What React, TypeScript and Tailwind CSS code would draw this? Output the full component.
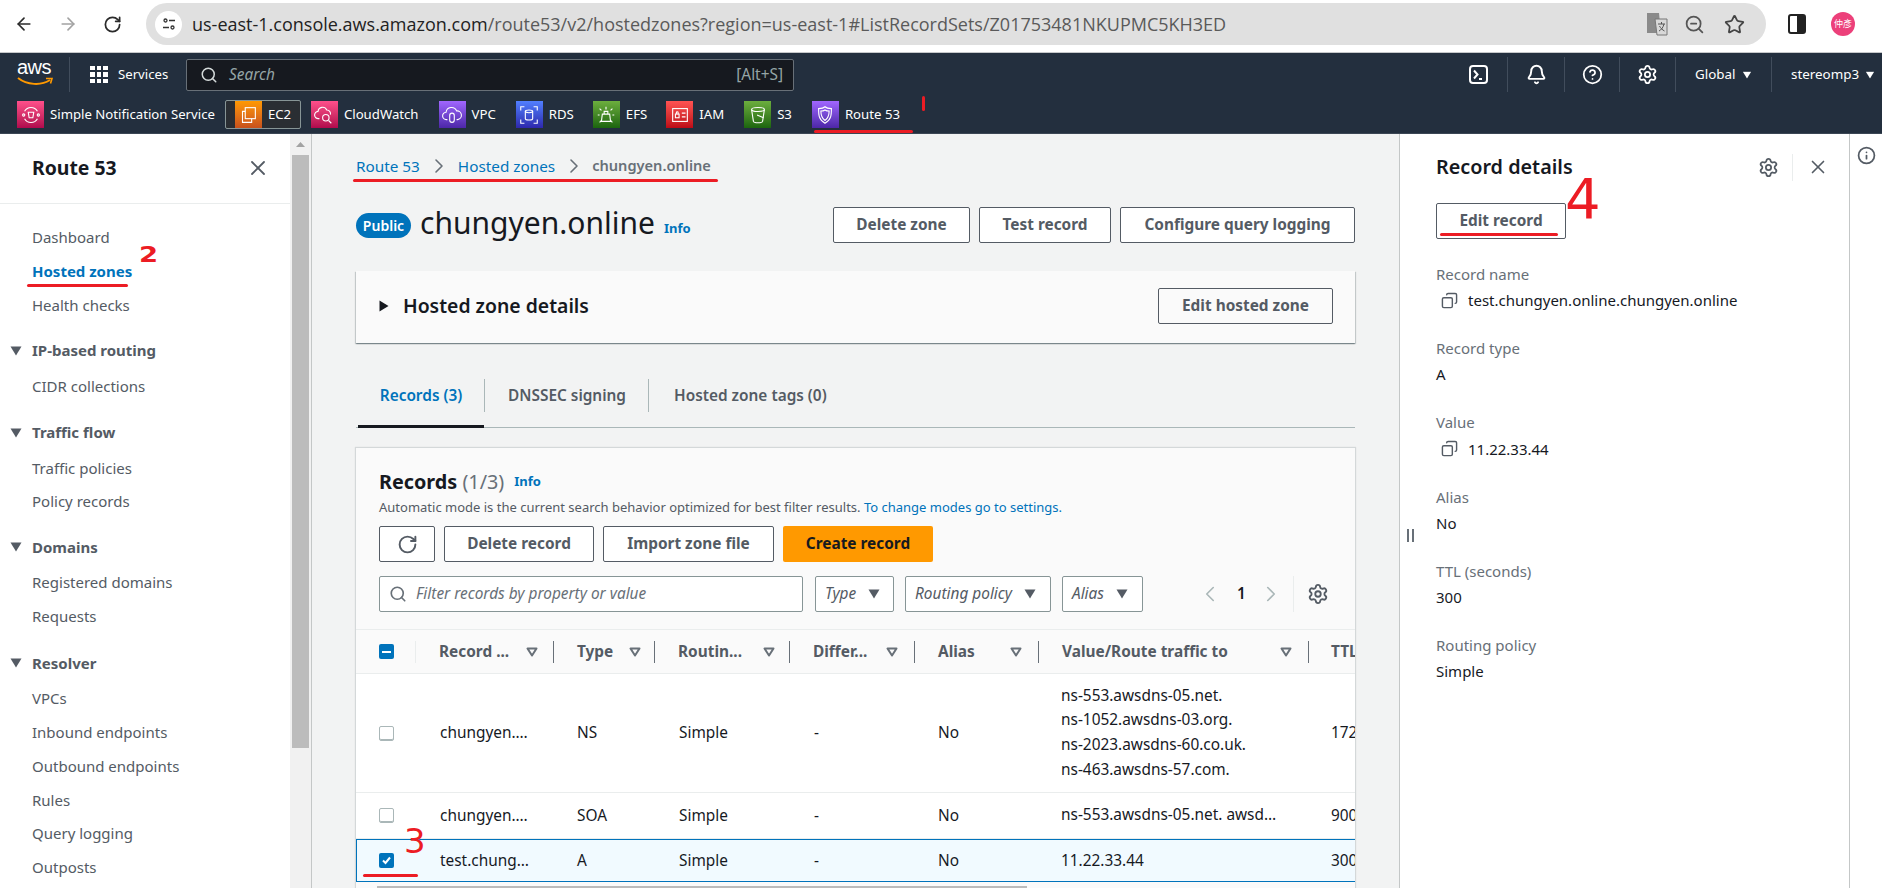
import {
  ArrowLeft,
  ArrowRight,
  Bell,
  ChevronLeft,
  ChevronRight,
  CircleHelp,
  Copy,
  Info,
  RotateCw,
  Search,
  Settings,
  Star,
  X,
  ZoomOut,
} from "lucide-react";

const services = [
  { name: "Simple Notification Service", bg: "from-[#b0084d] to-[#ff4f8b]", kind: "sns", w: "mr-[10px]" },
  { name: "EC2", bg: "from-[#c8511b] to-[#ff9900]", kind: "ec2", w: "" },
  { name: "CloudWatch", bg: "from-[#b0084d] to-[#ff4f8b]", kind: "cw", w: "mr-[20px]" },
  { name: "VPC", bg: "from-[#4d27a8] to-[#a166ff]", kind: "vpc", w: "mr-[20px]" },
  { name: "RDS", bg: "from-[#2e27ad] to-[#527fff]", kind: "rds", w: "mr-[19px]" },
  { name: "EFS", bg: "from-[#1b660f] to-[#6cae3e]", kind: "efs", w: "mr-[19px]" },
  { name: "IAM", bg: "from-[#bd0816] to-[#ff5252]", kind: "iam", w: "mr-[20px]" },
  { name: "S3", bg: "from-[#1b660f] to-[#6cae3e]", kind: "s3", w: "mr-[20px]" },
  { name: "Route 53", bg: "from-[#4d27a8] to-[#a166ff]", kind: "r53", w: "" },
];

const serviceGlyphs: Record<string, React.ReactNode> = {
  sns: (
    <>
      <path d="M5 8a8 8 0 0 1 14 0M5 16a8 8 0 0 0 14 0" />
      <path d="M9 9h6l-1 6h-4z" />
      <circle cx="4" cy="12" r="1.2" />
      <circle cx="20" cy="12" r="1.2" />
    </>
  ),
  ec2: (
    <>
      <rect x="9" y="4" width="11" height="12" />
      <path d="M9 8H6v12h10v-4" />
    </>
  ),
  cw: (
    <>
      <path d="M7 16H6a4 4 0 0 1-.5-8A5 5 0 0 1 15 6.500a4 4 0 0 1 4 5" />
      <circle cx="14" cy="15" r="3.500" />
      <path d="m17 18 3 3" />
    </>
  ),
  vpc: (
    <>
      <path d="M7 17H6a4 4 0 0 1-.5-8A6 6 0 0 1 17 7.500 4.500 4.500 0 0 1 18 17h-1" />
      <rect x="9.500" y="10" width="5" height="10" rx="2.500" />
    </>
  ),
  rds: (
    <>
      <path d="M3 7V3h4M17 3h4v4M3 17v4h4M21 17v4h-4" />
      <ellipse cx="12" cy="8" rx="4" ry="1.500" />
      <path d="M8 8v8c0 2 8 2 8 0V8" />
    </>
  ),
  efs: (
    <>
      <path d="M8 11h8l1 8H7z" />
      <path d="M10 11V8h4v3M12 3v3M3 12h2M19 12h2M5 5l2 2M19 5l-2 2M5 20l2-2M19 20l-2-2" />
    </>
  ),
  iam: (
    <>
      <rect x="4" y="5" width="16" height="14" />
      <rect x="7" y="11" width="4" height="4" />
      <path d="M8 11V9.500a1 1 0 0 1 2 0V11M14 10h4M14 14h4" />
    </>
  ),
  s3: (
    <>
      <ellipse cx="12" cy="6" rx="7" ry="2.200" />
      <path d="M5 6l2 13c.5 2 9.500 2 10 0l2-13" />
      <path d="m11 12 7 3" />
    </>
  ),
  r53: (
    <>
      <path d="M12 3c2 2 5 2 7 2 0 7 0 12-7 16C5 17 5 12 5 5c2 0 5 0 7-2z" />
      <path d="M12 6.500c1.500 1 3 1.200 4.500 1.200 0 4.500-.5 7.500-4.500 10.300-4-2.800-4.500-5.800-4.500-10.300 1.500 0 3-.2 4.500-1.200z" />
    </>
  ),
};

const sideNav = [
  { items: ["Dashboard", "Hosted zones", "Health checks"], mt: "mt-[21px]" },
  { title: "IP-based routing", items: ["CIDR collections"], mt: "mt-[22px]" },
  { title: "Traffic flow", items: ["Traffic policies", "Policy records"], mt: "mt-[23px]" },
  { title: "Domains", items: ["Registered domains", "Requests"], mt: "mt-[22px]" },
  { title: "Resolver", items: ["VPCs", "Inbound endpoints", "Outbound endpoints", "Rules", "Query logging", "Outposts"], mt: "mt-[23px]" },
];

const columns = [
  { label: "Record ...", icon: "ml-[17px]" },
  { label: "Type", icon: "ml-[16px]" },
  { label: "Routin...", icon: "ml-[21px]" },
  { label: "Differ...", icon: "ml-[19px]" },
  { label: "Alias", icon: "ml-[35px]" },
  { label: "Value/Route traffic to", icon: "ml-[52px]" },
];

const rows = [
  {
    name: "chungyen.…",
    type: "NS",
    ttl: "172",
    height: "h-[119px]",
    value: ["ns-553.awsdns-05.net.", "ns-1052.awsdns-03.org.", "ns-2023.awsdns-60.co.uk.", "ns-463.awsdns-57.com."],
  },
  { name: "chungyen.…", type: "SOA", ttl: "900", height: "h-[46px]", value: ["ns-553.awsdns-05.net. awsd…"] },
];

const details = [
  { label: "Record name", value: "test.chungyen.online.chungyen.online", copy: true },
  { label: "Record type", value: "A" },
  { label: "Value", value: "11.22.33.44", copy: true },
  { label: "Alias", value: "No" },
  { label: "TTL (seconds)", value: "300" },
  { label: "Routing policy", value: "Simple" },
];

const gridCols = "grid grid-cols-[60px_138px_101px_135px_125px_124px_270px_1fr]";

function Btn({ children, className = "" }: { children: React.ReactNode; className?: string }) {
  return (
    <button className={`h-9 flex items-center justify-center border border-[#545b64] rounded-[2px] bg-white text-[15.4px] font-bold text-[#545b64] ${className}`}>
      {children}
    </button>
  );
}

function SortIcon({ className = "" }: { className?: string }) {
  return (
    <svg width="12" height="10" viewBox="0 0 12 10" className={`shrink-0 ${className}`}>
      <path d="M1.500 1.500h9L6 8.500z" fill="none" stroke="#687078" strokeWidth="2" strokeLinejoin="round" />
    </svg>
  );
}

function Caret({ className = "" }: { className?: string }) {
  return (
    <svg width="12" height="10" viewBox="0 0 12 10" className={`shrink-0 ${className}`}>
      <path d="M0.500 0.500h11L6 9.500z" fill="currentColor" />
    </svg>
  );
}

function Select({ label, width, gap }: { label: string; width: string; gap: string }) {
  return (
    <div className={`h-9 flex items-center pl-[9px] border border-[#879596] rounded-[2px] bg-white ${width}`}>
      <span className="italic text-[15.4px] text-[#545b64]">{label}</span>
      <Caret className={`text-[#545b64] ${gap}`} />
    </div>
  );
}

function Checkbox({ state = "off" }: { state?: "off" | "on" | "mixed" }) {
  if (state === "off") return <div className="w-[15px] h-[15px] border border-[#aab7b8] rounded-[2px] bg-white shadow-[inset_0_-1px_0_#aab7b8]" />;
  return (
    <div className="w-[15px] h-[15px] rounded-[2px] bg-[#0073bb] flex items-center justify-center">
      {state === "on" ? (
        <svg width="11" height="11" viewBox="0 0 11 11">
          <path d="M2 5.500 4.500 8 9 2.500" fill="none" stroke="white" strokeWidth="2" />
        </svg>
      ) : (
        <div className="w-[9px] h-[2px] bg-white" />
      )}
    </div>
  );
}

function Chrome() {
  return (
    <div className="h-[53px] shrink-0 flex items-center pb-[6px] pt-[2px] bg-white border-b border-[#c6c8ca]">
      <ArrowLeft size={20} strokeWidth={2} className="ml-[14px] text-[#2b2b2b]" />
      <ArrowRight size={20} strokeWidth={2} className="ml-[24px] text-[#a3a3a3]" />
      <RotateCw size={19} strokeWidth={2.200} className="ml-[25px] text-[#2b2b2b]" />
      <div className="ml-[24px] w-[1620px] h-[42px] rounded-full bg-[#e0e0e0] flex items-center pl-[9px]">
        <div className="w-[27px] h-[27px] rounded-full bg-white flex items-center justify-center">
          <svg width="14" height="14" viewBox="0 0 14 14" fill="none" stroke="#333" strokeWidth="1.300">
            <circle cx="3.500" cy="3.500" r="1.500" />
            <path d="M7 3.500h6M1 10.500h6" />
            <circle cx="10.500" cy="10.500" r="1.500" />
          </svg>
        </div>
        <div className="ml-[10px] text-[18px] text-[#5a5a5a] whitespace-nowrap font-['Open_Sans',sans-serif]">
          <span className="text-[#222]">us-east-1.console.aws.amazon.com</span>
          /route53/v2/hostedzones?region=us-east-1#ListRecordSets/Z01753481NKUPMC5KH3ED
        </div>
        <svg width="22" height="24" viewBox="0 0 22 24" className="ml-auto shrink-0">
          <path d="M1 1h12l2 20H1z" fill="#8a8a8a" />
          <path d="M9 7h12v16H11z" fill="#d8d8d8" stroke="#777" />
          <path d="M12 12h7M15.500 10v2M18 12c-1 4-3 6-5 7M13.500 14c1 2 3 4 5 5" stroke="#555" fill="none" />
        </svg>
        <ZoomOut size={21} className="ml-[16px] text-[#555]" />
        <Star size={21} className="ml-[19px] mr-[21px] text-[#444]" />
      </div>
      <svg width="18" height="20" viewBox="0 0 18 20" className="ml-[22px] shrink-0">
        <rect x="1" y="1" width="16" height="18" rx="2" fill="white" stroke="#222" strokeWidth="2" />
        <rect x="9" y="1" width="8" height="18" fill="#222" />
      </svg>
      <div className="ml-[25px] w-6 h-6 rounded-full bg-[#ec407a] text-white text-[9px] flex items-center justify-center font-['Noto_Sans_CJK_TC',sans-serif]">
        仲彥
      </div>
    </div>
  );
}

function Glyph({ bg, kind }: { bg: string; kind: string }) {
  return (
    <div className={`w-[27px] h-[27px] shrink-0 bg-linear-to-t ${bg} flex items-center justify-center`}>
      <svg width="22" height="22" viewBox="0 0 24 24" fill="none" stroke="white" strokeWidth="1.200">
        {serviceGlyphs[kind]}
      </svg>
    </div>
  );
}

function ConsoleNav() {
  return (
    <div className="h-[80px] shrink-0 bg-[#232f3e] text-white flex flex-col">
      <div className="h-[39px] flex items-end">
        <div className="w-[70px] h-[35px] border-r border-[#414d5c] flex flex-col items-start pl-[17px] -mt-[1px]">
          <span className="text-[20px] leading-[21px] -tracking-[0.5px] font-['Liberation_Sans',sans-serif]">aws</span>
          <svg width="36" height="9" viewBox="0 0 36 9" className="-mt-[1px]">
            <path d="M1 1c9 7 23 8 32 2" fill="none" stroke="#ff9900" strokeWidth="2" />
            <path d="M29 1.500h6l-1.500 5" fill="none" stroke="#ff9900" strokeWidth="1.600" />
          </svg>
        </div>
        <div className="h-[35px] flex items-center pl-[20px]">
          <div className="grid grid-cols-3 gap-[2px] w-[18px]">
            {Array.from({ length: 9 }).map((_, i) => (
              <div key={i} className="w-[4.500px] h-[4.500px] bg-white" />
            ))}
          </div>
          <span className="ml-[10px] text-[13.200px] w-[68px]">Services</span>
        </div>
        <div className="h-[32px] w-[608px] mb-[1px] flex items-center bg-[#16191f] border border-[#687078] rounded-[2px] pl-[13px] pr-[10px]">
          <Search size={18} strokeWidth={2} className="text-[#d5dbdb]" />
          <span className="ml-[11px] text-[15.400px] italic text-[#95a5a6]">Search</span>
          <span className="ml-auto text-[15.400px] text-[#95a5a6]">[Alt+S]</span>
        </div>
        <div className="ml-auto h-[35px] flex items-center text-[13.400px]">
          <div className="w-[53px] h-full pr-[5px] flex items-center justify-center border-r border-[#414d5c]">
            <svg width="19" height="19" viewBox="0 0 19 19" fill="none" stroke="white" strokeWidth="2">
              <rect x="1" y="1" width="17" height="17" rx="3" />
              <path d="m5 5.500 3.500 4L5 13.500M10 14h3" />
            </svg>
          </div>
          <div className="w-[57px] h-full flex items-center justify-center border-r border-[#414d5c]">
            <Bell size={21} strokeWidth={2.200} />
          </div>
          <div className="w-[55px] h-full flex items-center justify-center border-r border-[#414d5c]">
            <CircleHelp size={21} strokeWidth={2} />
          </div>
          <div className="w-[56px] h-full flex items-center justify-center border-r border-[#414d5c]">
            <Settings size={21} strokeWidth={2} />
          </div>
          <div className="w-[96px] h-full flex items-center pl-[19px] border-r border-[#414d5c]">
            Global
            <Caret className="ml-[5px] scale-75" />
          </div>
          <div className="w-[110px] h-full flex items-center pl-[19px]">
            stereomp3
            <Caret className="ml-[5px] scale-75" />
          </div>
        </div>
      </div>
      <div className="flex-1 flex items-center pl-[17px] pt-[4px] text-[13.200px]">
        {services.map((s) =>
          s.kind === "ec2" ? (
            <div key={s.name} className="h-[29px] w-[76px] mr-[10px] flex items-center pl-[9px] rounded-[2px] border border-[#879596] bg-[#2a2e33]">
              <Glyph bg={s.bg} kind={s.kind} />
              <span className="ml-[6px]">{s.name}</span>
            </div>
          ) : (
            <div key={s.name} className={`flex items-center ${s.w}`}>
              <Glyph bg={s.bg} kind={s.kind} />
              <span className="ml-[6px] whitespace-nowrap">{s.name}</span>
            </div>
          ),
        )}
      </div>
    </div>
  );
}

function Sidebar() {
  return (
    <aside className="w-[290px] shrink-0 bg-white overflow-hidden">
      <div className="h-[70px] flex items-center justify-between pl-[32px] pr-[20px] pb-[2px] border-b border-[#eaeded]">
        <span className="text-[19.400px] font-bold text-[#16191f]">Route 53</span>
        <X size={24} strokeWidth={1.800} className="text-[#545b64]" />
      </div>
      {sideNav.map((group, i) => (
        <div key={i} className={group.mt}>
          {group.title && (
            <div className="h-[24px] flex items-center mb-[11px] pl-[10px] text-[15px] font-bold text-[#545b64]">
              <Caret className="mr-[10px]" />
              {group.title}
            </div>
          )}
          <div className="flex flex-col gap-[9.800px]">
            {group.items.map((item) => (
              <div
                key={item}
                className={`h-[24px] leading-[24px] pl-[32px] text-[15px] ${item === "Hosted zones" ? "font-bold text-[#0073bb]" : "text-[#545b64]"}`}
              >
                {item}
              </div>
            ))}
          </div>
        </div>
      ))}
    </aside>
  );
}

function Scrollbar() {
  return (
    <div className="w-[22px] shrink-0 flex flex-col items-start bg-[#f1f1f1] border-r border-[#c4c7c7] pl-[2px]">
      <svg width="17" height="21" viewBox="0 0 17 21">
        <path d="M4 13h9L8.500 8z" fill="#a3a3a3" />
      </svg>
      <div className="w-[17px] h-[593px] bg-[#bcbcbc]" />
    </div>
  );
}

function MainContent() {
  return (
    <main className="flex-1 min-w-0 bg-[#f2f3f3] px-[44px] pt-[20px] overflow-hidden">
      <div className="h-6 flex items-center text-[15.300px] text-[#0073bb]">
        <span>Route 53</span>
        <ChevronRight size={24} strokeWidth={1.600} className="mx-[7px] text-[#687078]" />
        <span>Hosted zones</span>
        <ChevronRight size={24} strokeWidth={1.600} className="ml-[7px] mr-[6px] text-[#687078]" />
        <span className="text-[14.600px] font-semibold text-[#687078]">chungyen.online</span>
      </div>

      <div className="mt-[29px] h-9 flex items-center">
        <span className="h-[25px] w-[55px] rounded-full bg-[#0073bb] text-white text-[14px] font-semibold flex items-center justify-center">Public</span>
        <h1 className="ml-[9px] -mt-[5px] text-[30px] leading-[36px] text-[#16191f]">chungyen.online</h1>
        <span className="ml-[9px] mt-[7px] text-[13px] font-bold text-[#0073bb]">Info</span>
        <div className="ml-auto flex gap-[9px]">
          <Btn className="w-[137px]">Delete zone</Btn>
          <Btn className="w-[132px]">Test record</Btn>
          <Btn className="w-[235px]">Configure query logging</Btn>
        </div>
      </div>

      <div className="mt-[28px] h-[72px] bg-[#fafafa] flex items-center pl-[23px] pr-[22px] pb-[3px] shadow-[0_1px_1px_0_rgba(0,28,36,0.3),1px_1px_1px_0_rgba(0,28,36,0.15),-1px_1px_1px_0_rgba(0,28,36,0.15)]">
        <svg width="10" height="12" viewBox="0 0 10 12" className="shrink-0">
          <path d="M0.500 0.500v11l9-5.500z" fill="#16191f" />
        </svg>
        <h2 className="ml-[14px] text-[19.400px] font-semibold text-[#16191f]">Hosted zone details</h2>
        <Btn className="ml-auto w-[175px] !bg-[#fafafa]">Edit hosted zone</Btn>
      </div>

      <div className="mt-[28px] h-[57px] flex border-b border-[#aab7b8] text-[15.400px] font-semibold text-[#545b64]">
        <div className="ml-[2px] w-[126px] h-[57px] pt-[8px] border-b-[3px] border-[#16191f] box-border">
          <div className="h-[33px] flex items-center justify-center text-[#0073bb]">Records (3)</div>
        </div>
        <div className="w-[165px] pt-[8px]">
          <div className="h-[33px] flex items-center justify-center pl-[1px] border-x border-[#aab7b8]">DNSSEC signing</div>
        </div>
        <div className="pt-[8px] pl-[25px]">
          <div className="h-[33px] flex items-center">Hosted zone tags (0)</div>
        </div>
      </div>

      <section className="mt-[20px] bg-[#fafafa] shadow-[0_0_1px_1px_rgba(0,28,36,0.12)]">
        <div className="h-[181px] px-[23px] pt-[22px]">
          <div className="h-6 flex items-center">
            <h2 className="text-[19.800px] font-bold text-[#16191f]">
              Records <span className="font-normal text-[#687078]">(1/3)</span>
            </h2>
            <span className="ml-[10px] text-[13px] font-bold text-[#0073bb]">Info</span>
          </div>
          <p className="mt-[2px] text-[13px] leading-[22px] text-[#545b64] whitespace-nowrap">
            Automatic mode is the current search behavior optimized for best filter results.{" "}
            <span className="text-[#0073bb]">To change modes go to settings.</span>
          </p>
          <div className="mt-[8px] flex gap-[9px]">
            <Btn className="w-[56px]">
              <RotateCw size={21} strokeWidth={2.200} />
            </Btn>
            <Btn className="w-[150px]">Delete record</Btn>
            <Btn className="w-[171px]">Import zone file</Btn>
            <button className="h-9 w-[150px] rounded-[2px] bg-[#ff9900] text-[15.400px] font-bold text-[#16191f]">Create record</button>
          </div>
          <div className="mt-[14px] h-9 flex items-center">
            <div className="w-[424px] h-9 flex items-center pl-[9px] border border-[#879596] rounded-[2px] bg-white">
              <Search size={18} strokeWidth={2.200} className="text-[#687078]" />
              <span className="ml-[9px] italic text-[15.400px] text-[#687078]">Filter records by property or value</span>
            </div>
            <div className="ml-[12px] flex gap-[11px]">
              <Select label="Type" width="w-[79px]" gap="ml-[12px]" />
              <Select label="Routing policy" width="w-[146px]" gap="ml-[12px]" />
              <Select label="Alias" width="w-[81px]" gap="ml-[12px]" />
            </div>
            <ChevronLeft size={26} strokeWidth={1.500} className="ml-[54px] text-[#aab7b8]" />
            <span className="ml-[14px] text-[15.400px] font-semibold text-[#16191f]">1</span>
            <ChevronRight size={26} strokeWidth={1.500} className="ml-[12px] text-[#aab7b8]" />
            <div className="ml-[9px] h-9 border-l border-[#eaeded]" />
            <Settings size={22} strokeWidth={2} className="ml-[13px] text-[#545b64]" />
          </div>
        </div>

        <div className="overflow-hidden">
          <div className={`${gridCols} h-[45px] items-center bg-[#fafafa] border-y border-[#eaeded] text-[15.400px] font-bold text-[#545b64]`}>
            <div className="h-[22px] pl-[23px] flex items-center border-r border-[#eaeded]">
              <Checkbox state="mixed" />
            </div>
            {columns.map((c) => (
              <div key={c.label} className="h-[22px] pl-[23px] flex items-center whitespace-nowrap border-r border-[#687078]">
                {c.label}
                <SortIcon className={c.icon} />
              </div>
            ))}
            <div className="pl-[22px]">TTL</div>
          </div>

          {rows.map((r) => (
            <div key={r.type} className={`${gridCols} ${r.height} items-center bg-white border-b border-[#eaeded] text-[15.400px] text-[#16191f]`}>
              <div className="pl-[23px]">
                <Checkbox />
              </div>
              <div className="pl-[24px]">{r.name}</div>
              <div className="pl-[23px]">{r.type}</div>
              <div className="pl-[24px]">Simple</div>
              <div className="pl-[24px]">-</div>
              <div className="pl-[23px]">No</div>
              <div className="pl-[22px] leading-[24.600px] whitespace-nowrap">
                {r.value.map((v) => (
                  <div key={v}>{v}</div>
                ))}
              </div>
              <div className="pl-[22px]">{r.ttl}</div>
            </div>
          ))}

          <div className={`${gridCols} h-[43px] items-center bg-[#f1faff] border-y border-[#0073bb] shadow-[inset_1px_0_0_#0073bb] text-[15.400px] text-[#16191f]`}>
            <div className="pl-[23px]">
              <Checkbox state="on" />
            </div>
            <div className="pl-[24px]">test.chung…</div>
            <div className="pl-[23px]">A</div>
            <div className="pl-[24px]">Simple</div>
            <div className="pl-[24px]">-</div>
            <div className="pl-[23px]">No</div>
            <div className="pl-[22px]">11.22.33.44</div>
            <div className="pl-[22px]">300</div>
          </div>
          <div className="mt-[4px] ml-[21px] w-[650px] h-[3px] bg-[#bbbbbb]" />
        </div>
      </section>
    </main>
  );
}

function DetailsPanel() {
  return (
    <aside className="w-[451px] shrink-0 bg-white border-x border-[#c4c7c7] pl-[36px] relative">
      <div className="h-[66px] mb-[3px] flex items-center">
        <h2 className="text-[19.800px] font-semibold text-[#16191f]">Record details</h2>
        <Settings size={21} strokeWidth={2} className="ml-auto text-[#545b64]" />
        <div className="ml-[13px] h-[27px] border-l border-[#eaeded]" />
        <X size={22} strokeWidth={1.800} className="ml-[14px] mr-[20px] text-[#545b64]" />
      </div>
      <Btn className="w-[130px]">Edit record</Btn>
      <div className="mt-[23px] flex flex-col gap-[24.200px] text-[15px] leading-[24.200px]">
        {details.map((d) => (
          <div key={d.label} className="h-[50px]">
            <div className="text-[#687078]">{d.label}</div>
            <div className="mt-[2px] flex items-center text-[#16191f]">
              {d.copy && <Copy size={17} strokeWidth={2} className="ml-[5px] mr-[10px] -scale-x-100 text-[#545b64]" />}
              {d.value}
            </div>
          </div>
        ))}
      </div>
      <div className="absolute left-[7px] top-[395px] flex gap-[3px]">
        <div className="w-[2px] h-[13px] bg-[#687078]" />
        <div className="w-[2px] h-[13px] bg-[#687078]" />
      </div>
    </aside>
  );
}

// red marks someone drew over the screenshot
function Annotations() {
  const line = "absolute bg-[#ec1c24] rounded-full";
  const digit = "absolute text-[#ec1c24] leading-none font-['DejaVu_Sans',sans-serif]";
  return (
    <>
      <div className={`${line} left-[814px] top-[130px] w-[99px] h-[3px]`} />
      <div className={`${line} left-[922px] top-[96px] w-[3px] h-[15px]`} />
      <div className={`${line} left-[353px] top-[179px] w-[365px] h-[3px]`} />
      <div className={`${line} left-[27px] top-[284px] w-[101px] h-[3px]`} />
      <div className={`${line} left-[363px] top-[874px] w-[55px] h-[3px]`} />
      <div className={`${line} left-[1440px] top-[233px] w-[118px] h-[3px]`} />
      <span className={`${digit} left-[141px] top-[244px] text-[22px] font-bold scale-x-125`}>2</span>
      <span className={`${digit} left-[404px] top-[824px] text-[34px]`}>3</span>
      <span className={`${digit} left-[1565px] top-[171px] text-[56px]`}>4</span>
    </>
  );
}

export default function App() {
  return (
    <div className="relative h-[888px] w-[1882px] overflow-hidden flex flex-col bg-white font-['Noto_Sans',sans-serif]">
      <Chrome />
      <ConsoleNav />
      <div className="flex-1 min-h-0 flex border-t border-[#3b4654]">
        <Sidebar />
        <Scrollbar />
        <MainContent />
        <DetailsPanel />
        <div className="w-[32px] shrink-0 bg-white flex justify-center pt-[12px]">
          <Info size={19} strokeWidth={2.200} className="text-[#545b64]" />
        </div>
      </div>
      <Annotations />
    </div>
  );
}
